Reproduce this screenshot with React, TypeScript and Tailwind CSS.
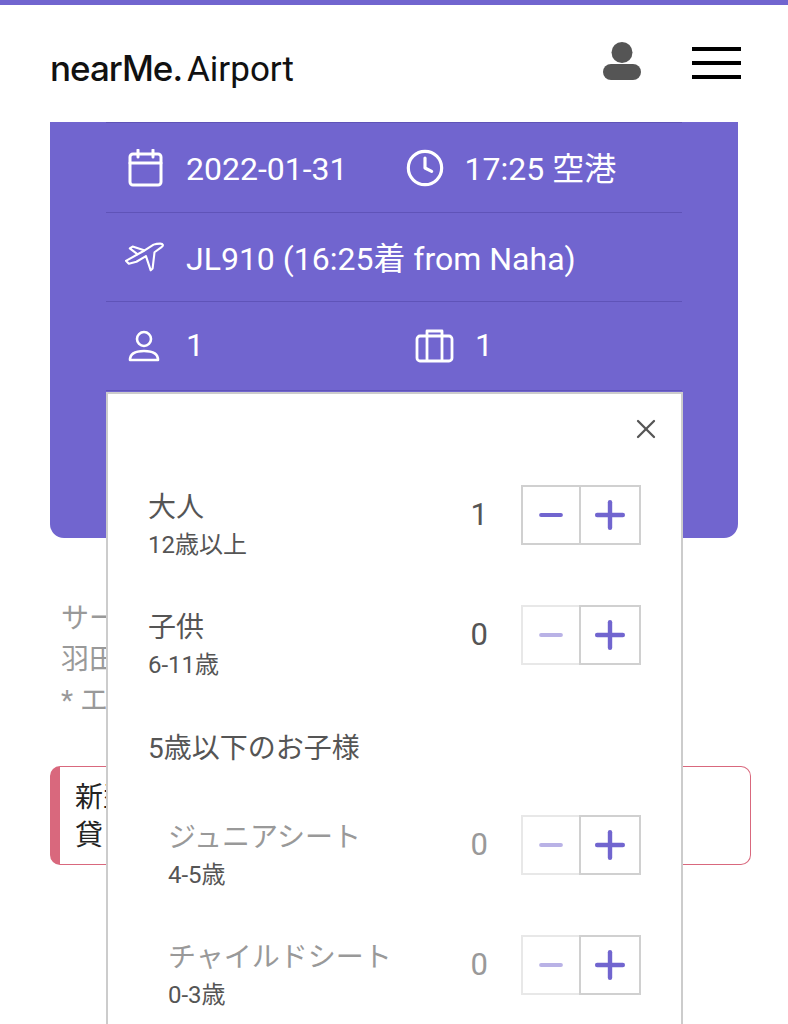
import { Clock, X, Minus, Plus } from "lucide-react";

const cjk = "font-['Roboto','Noto_Sans_CJK_JP',sans-serif]";

function Stepper({ minusOff, value, muted }: { minusOff?: boolean; value: number; muted?: boolean }) {
  return (
    <div className="flex items-center">
      <span className={`mb-[2px] w-[60px] pr-[33px] text-right text-[31px] leading-none ${muted ? "text-[#999]" : "text-[#555]"}`}>{value}</span>
      <div className={`flex h-[60px] w-[60px] items-center justify-center border-2 ${minusOff ? "border-[#e8e8e8]" : "border-[#d0d0d0]"}`}>
        <Minus size={34} strokeWidth={2.8} className={minusOff ? "text-[#b9b2e6]" : "text-[#7165cf]"} />
      </div>
      <div className="-ml-[2px] flex h-[60px] w-[62px] items-center justify-center border-2 border-[#d0d0d0]">
        <Plus size={44} strokeWidth={2.4} className="text-[#7165cf]" />
      </div>
    </div>
  );
}

function PaxRow({ title, sub, value, minusOff, child }: { title: string; sub: string; value: number; minusOff?: boolean; child?: boolean }) {
  return (
    <div className={`flex h-[60px] items-start justify-between ${child ? "pl-[20px]" : ""}`}>
      <div className="pt-[4px]">
        <div className={`text-[28px] leading-[38px] ${child ? "text-[#999]" : "text-[#555]"}`}>{title}</div>
        <div className="text-[24px] leading-[37px] text-[#555]">{sub}</div>
      </div>
      <Stepper value={value} minusOff={minusOff} muted={child} />
    </div>
  );
}

export default function App() {
  return (
    <div className={`relative h-[1024px] w-[788px] overflow-hidden bg-white ${cjk}`}>
      <div className="h-[5px] bg-[#7165cf]" />

      <header className="flex h-[116px] items-center justify-between pl-[50px] pr-[47px]">
        <div className="mt-[11px] text-[35px] leading-none text-[#111]">
          <span className="font-['Inter',sans-serif] font-medium tracking-[-1px]">nearMe.</span>
          <span className="ml-[5px]">Airport</span>
        </div>
        <div className="flex items-center gap-[51px]">
          <svg width="38" height="38" viewBox="0 0 38 38" className="-mt-[4px]">
            <circle cx="19" cy="10.5" r="10.5" fill="#555" />
            <rect x="0" y="22" width="38" height="16" rx="8" fill="#555" />
          </svg>
          <div className="flex w-[49px] flex-col gap-[10px]">
            <div className="h-[4px] bg-black" />
            <div className="h-[4px] bg-black" />
            <div className="h-[4px] bg-black" />
          </div>
        </div>
      </header>

      <section className="mx-[50px] h-[416px] rounded-b-[14px] bg-[#7165cf] px-[56px] text-[32px] text-white">
        <div className="mt-[1px] flex h-[91px] items-center border-y border-[#5f53b8] pl-[22px]">
          <svg width="36" height="38" viewBox="0 0 36 38" fill="none" stroke="white" strokeWidth="3" strokeLinecap="round" strokeLinejoin="round">
            <rect x="2" y="5" width="31" height="31" rx="3" />
            <path d="M2 14h31M10 1v7M25 1v7" />
          </svg>
          <span className="ml-[22px] mt-[2px]">2022-01-31</span>
          <Clock size={40} strokeWidth={1.9} className="ml-[57px]" />
          <span className="ml-[20px] mt-[2px]">17:25 空港</span>
        </div>
        <div className="flex h-[89px] items-center border-b border-[#5f53b8] pl-[19px]">
          <svg width="40" height="32" viewBox="0 0 42 32" fill="none" stroke="white" strokeWidth="2.2" strokeLinecap="round" strokeLinejoin="round">
            <path d="M37 2C40 2 41 4 38 6L31 11 29 28 27 30 22 15 12 21 4 23 1 20 19 10 30 3C33 2 35 2 37 2Z" />
            <path d="M20 9 8 5 5 7 13 13" />
          </svg>
          <span className="ml-[21px] mt-[4px]">JL910 (16:25着 from Naha)</span>
        </div>
        <div className="flex h-[89px] items-center border-b border-[#5f53b8] pl-[22px]">
          <div className="flex w-[287px] items-center">
            <svg width="34" height="32" viewBox="0 0 34 32" fill="none" stroke="white" strokeWidth="2.6">
              <circle cx="16" cy="9" r="7" />
              <path d="M2 30c0-7 6-9 14-9s14 2 14 9z" strokeLinejoin="round" />
            </svg>
            <span className="mb-[2px] ml-[24px]">1</span>
          </div>
          <svg width="40" height="36" viewBox="0 0 40 36" fill="none" stroke="white" strokeWidth="2.8" strokeLinejoin="round">
            <rect x="2" y="8" width="35" height="25" rx="3" />
            <path d="M12 33V8M27 33V8M12 8V3h15v5" />
          </svg>
          <span className="mb-[2px] ml-[20px]">1</span>
        </div>
      </section>

      <div className="px-[61px] pt-[60px] text-[28px] leading-[41px] text-[#999]">
        <p>サービス</p>
        <p>羽田空港</p>
        <p>* エリア</p>
      </div>

      <div className="mx-[50px] mt-[45px] h-[99px] w-[701px] rounded-[10px] border border-l-[10px] border-[#d9687d] pl-[15px] pt-[12px] text-[28px] leading-[38px] text-[#222]">
        <p>新型</p>
        <p>貸</p>
      </div>

      {/* passenger popover */}
      <div className="absolute left-[106px] top-[392px] h-[700px] w-[577px] border-2 border-[#ccc] bg-white pl-[40px] pr-[40px]">
        <div className="-mr-[21px] flex h-[91px] justify-end pt-[19px]">
          <X size={32} strokeWidth={1.7} className="text-[#555]" />
        </div>
        <PaxRow title="大人" sub="12歳以上" value={1} />
        <div className="h-[60px]" />
        <PaxRow title="子供" sub="6-11歳" value={0} minusOff />
        <div className="mt-[65px] text-[28px] leading-[38px] text-[#555]">5歳以下のお子様</div>
        <div className="h-[47px]" />
        <PaxRow title="ジュニアシート" sub="4-5歳" value={0} minusOff child />
        <div className="h-[60px]" />
        <PaxRow title="チャイルドシート" sub="0-3歳" value={0} minusOff child />
      </div>
    </div>
  );
}
